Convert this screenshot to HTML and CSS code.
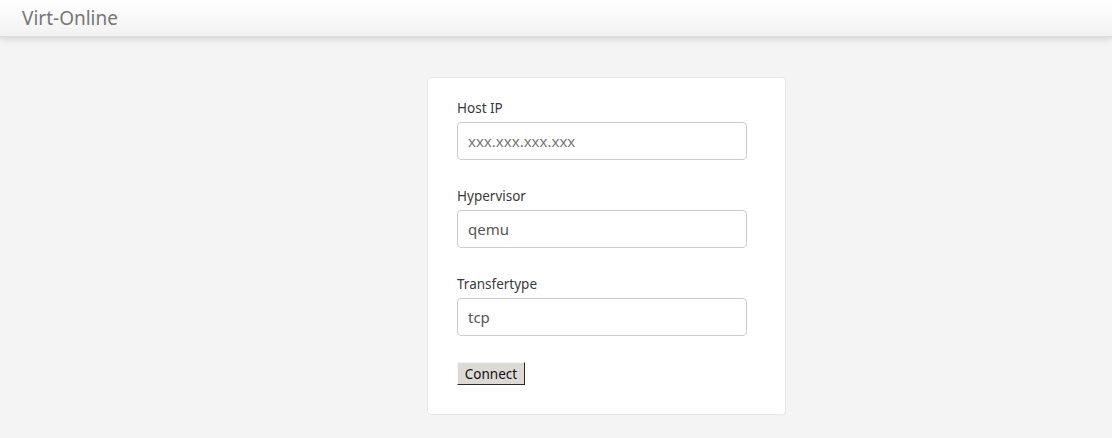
FILE: index.html
```html
<!DOCTYPE html>
<html>
<head>
<meta charset="utf-8">
<title>Virt-Online</title>
<link rel="stylesheet" href="styles.css">
</head>
<body>
<nav class="navbar"><span class="brand">Virt-Online</span></nav>
<main class="main">
  <form class="card">
    <div class="group">
      <label class="label">Host IP</label>
      <input class="field" type="text" placeholder="xxx.xxx.xxx.xxx">
    </div>
    <div class="group">
      <label class="label">Hypervisor</label>
      <input class="field" type="text" value="qemu">
    </div>
    <div class="group">
      <label class="label">Transfertype</label>
      <input class="field" type="text" value="tcp">
    </div>
    <button class="btn" type="button">Connect</button>
  </form>
</main>
</body>
</html>
```
FILE: styles.css
```css
html, body { margin: 0; padding: 0; }
body {
  background: #f4f4f4;
  font-family: "Noto Sans", "Open Sans", sans-serif;
  height: 438px;
  overflow: hidden;
}
.navbar {
  height: 37px;
  background: linear-gradient(#ffffff, #f2f2f2);
  box-shadow: 0 1px 8px rgba(0,0,0,0.18);
  border-bottom: 1px solid #dedede;
  box-sizing: border-box;
  padding-left: 22px;
  display: flex;
  align-items: center;
}
.brand {
  font-size: 19px;
  color: #777;
}
.main {
  padding-top: 40px;
}
.card {
  margin-left: 427px;
  width: 359px;
  box-sizing: border-box;
  background: #fff;
  border: 1px solid #e8e8e8;
  border-radius: 4px;
  padding: 20px 29px 29px;
  display: flex;
  flex-direction: column;
  align-items: flex-start;
}
.group {
  display: flex;
  flex-direction: column;
  margin-bottom: 26px;
}
.label {
  font-size: 13.5px;
  line-height: 20px;
  color: #3a3a3a;
  margin-bottom: 4px;
}
.field {
  width: 290px;
  height: 38px;
  box-sizing: border-box;
  border: 1px solid #ccc;
  border-radius: 4px;
  padding: 0 10px;
  font-family: inherit;
  font-size: 15px;
  color: #555;
  background: #fff;
  margin: 0;
}
.field::placeholder { color: #777; }
.btn {
  font-family: "Noto Sans", sans-serif;
  font-size: 13.5px;
  height: 23px;
  width: 68px;
  padding: 0;
  margin: 0;
  background: #dcdad5;
  color: #111;
  border: 1px solid;
  border-color: #f5f4f2 #2a2a2a #2a2a2a #f5f4f2;
  border-radius: 0;
}
```
